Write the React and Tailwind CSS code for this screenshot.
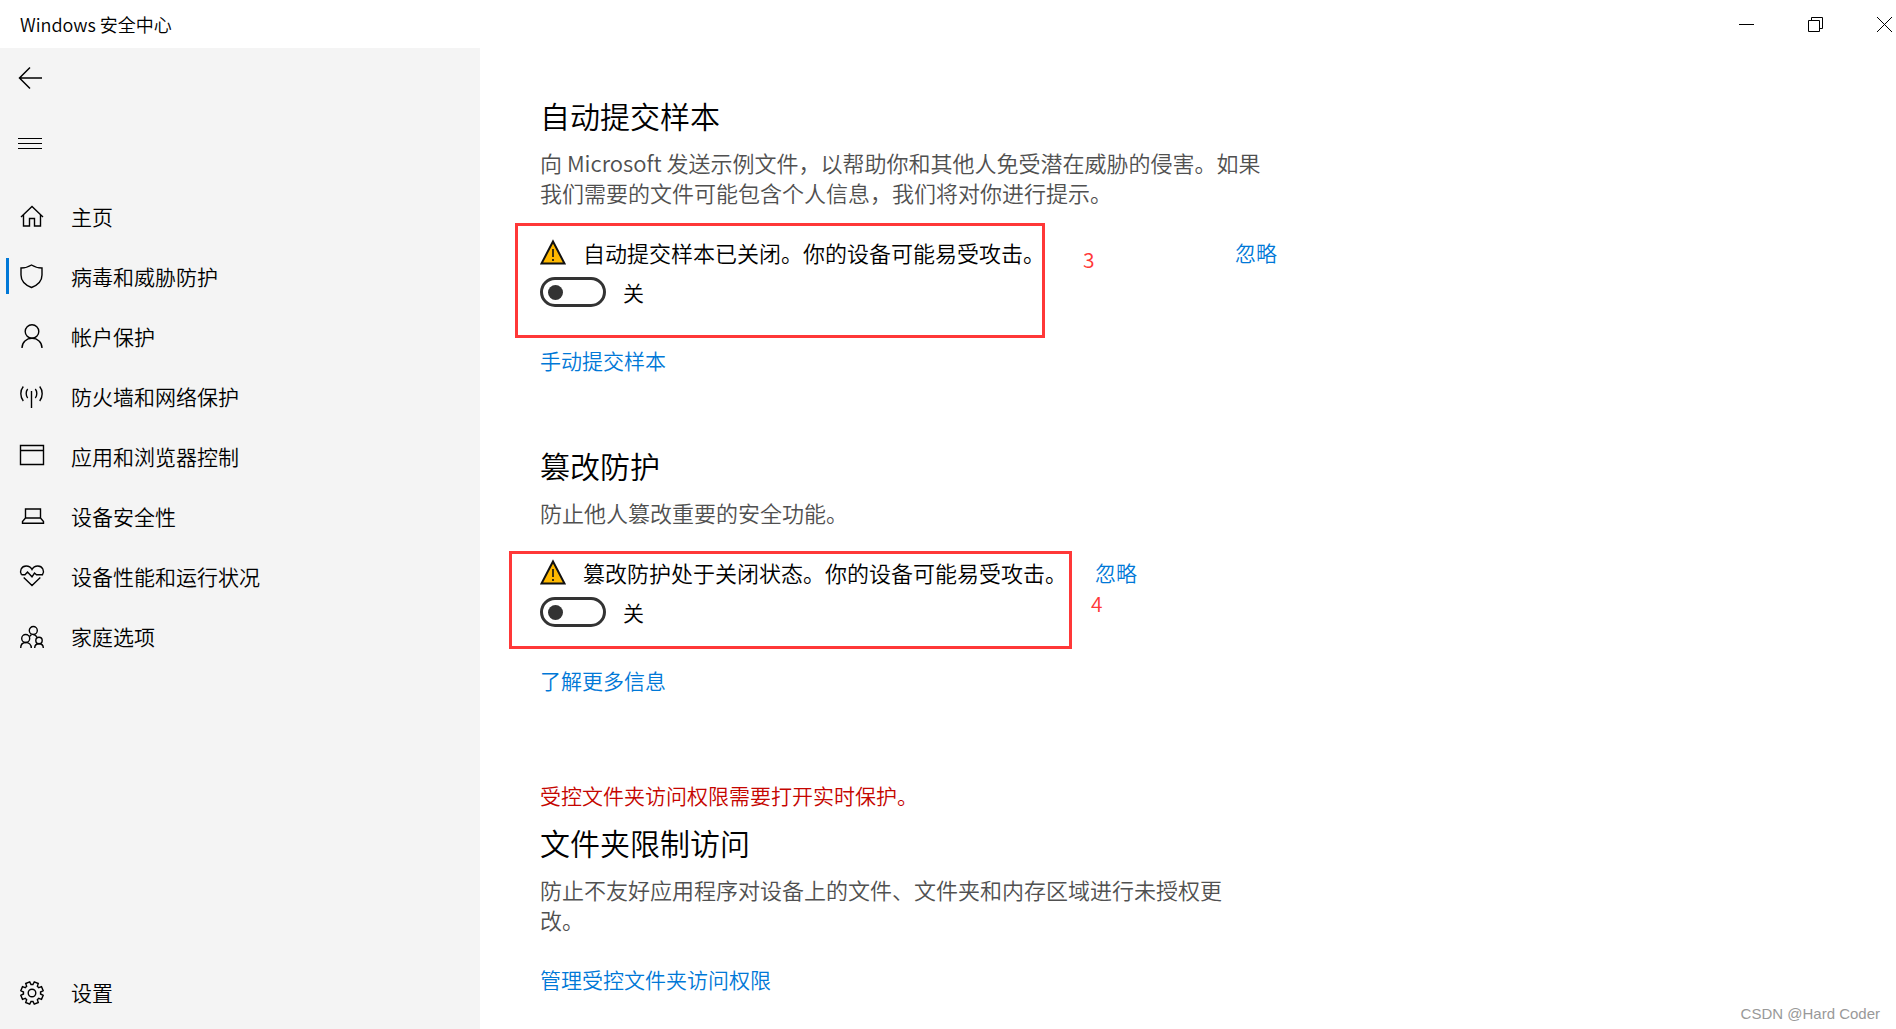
import { useState } from 'react';

// Eight-toothed gear outline around (12, 12)
const gearPath = () => {
  const points = [];
  for (let i = 0; i < 8; i++) {
    const mid = 22.5 + i * 45;
    [[-16, 8.6], [-11, 11.4], [11, 11.4], [16, 8.6]].forEach(([offset, radius]) => {
      const angle = ((mid + offset) * Math.PI) / 180;
      points.push(`${(12 + radius * Math.sin(angle)).toFixed(2)} ${(12 - radius * Math.cos(angle)).toFixed(2)}`);
    });
  }
  return `M${points.join('L')}Z`;
};

const icons = {
  home: <path d="M1 12L12 1.5L23 12M3.5 10V21H9.5V13.5H14.5V21H20.5V10" />,
  shield: <path d="M11.5 0C8.5 2 4.5 3 1 3V10C1 16 5 20 11.5 22.5C18 20 22 16 22 10V3C18.5 3 14.5 2 11.5 0Z" />,
  account: (
    <>
      <circle cx="12" cy="6.5" r="6.8" />
      <path d="M2 23C2 17 6.5 13.3 12 13.3S22 17 22 23" />
    </>
  ),
  network: (
    <path d="M11.5 6V23M7.7 4C5.7 6.5 5.7 10.5 7.7 13M15.3 4C17.3 6.5 17.3 10.5 15.3 13M3.3 1.5C0 5.5 0 12 3.3 16M19.7 1.5C23 5.5 23 12 19.7 16" />
  ),
  browser: <path d="M.5 .5H23.5V19.5H.5ZM.5 5.5H23.5" />,
  device: <path d="M5.5 4H20.5V13H5.5ZM5.5 13L2.5 16.5V18.3H23.5V16.5L20.5 13" />,
  health: (
    <path d="M1.5 9.7C-.8 6 1.3 1 6.2 1C9 1 11 2.5 12 4.5C13 2.5 15 1 17.8 1C22.7 1 24.8 6 22.5 9.7H16.5L14.5 8L12 11.8L7.5 7L5 9.7H1.5M3.7 12.5L12 20.5L20.3 12.5" />
  ),
  family: (
    <>
      <circle cx="13.3" cy="5.5" r="4" />
      <circle cx="5.7" cy="13.5" r="4" />
      <circle cx="19" cy="15.5" r="3.2" />
      <path d="M.7 23C.7 19.5 3 17.5 5.9 17.5S11.3 19.5 11.3 23M14.7 23C14.7 20.5 16.5 18.7 19 18.7S23.3 20.5 23.3 23M13.5 9.5C15 9.7 16.3 10.8 17 12.5M9.5 11.5L11.5 9.5" />
    </>
  ),
  settings: (
    <>
      <path d={gearPath()} />
      <circle cx="12" cy="12" r="3.8" />
    </>
  )
};

const navItems = [
  { id: 'home', label: '主页' },
  { id: 'shield', label: '病毒和威胁防护' },
  { id: 'account', label: '帐户保护' },
  { id: 'network', label: '防火墙和网络保护' },
  { id: 'browser', label: '应用和浏览器控制' },
  { id: 'device', label: '设备安全性' },
  { id: 'health', label: '设备性能和运行状况' },
  { id: 'family', label: '家庭选项' }
];

function NavItem({ id, label, active }) {
  return (
    <a href={`#${id}`} className="relative flex h-[60px] items-center gap-[27px] pl-5 text-[21px] leading-[30px]">
      {active && <span className="absolute left-1.5 h-9 w-[3px] bg-[#0078d7]" />}
      <svg className="size-6 shrink-0 overflow-visible" viewBox="0 -1 24 24" fill="none" stroke="currentColor" strokeWidth="1.4">
        {icons[id]}
      </svg>
      {label}
    </a>
  );
}

function WarningIcon() {
  return (
    <svg className="size-[26px] shrink-0" viewBox="0 0 26 26">
      <path d="M13 2.5L24.5 24.5H1.5Z" fill="#ffb900" stroke="#111" strokeWidth="2" />
      <path d="M13 10V18M13 20V22" stroke="#111" strokeWidth="1.6" />
    </svg>
  );
}

function Toggle({ id, name }) {
  const [on, setOn] = useState(false);

  return (
    <div className="mt-2.5 flex h-[30px] items-center gap-[17px]">
      <input
        id={id}
        type="checkbox"
        role="switch"
        aria-label={name}
        checked={on}
        onChange={() => setOn(!on)}
        className="flex h-[30px] w-[66px] appearance-none items-center rounded-full border-3 border-[#333] px-[5px] before:size-[15px] before:rounded-full before:bg-[#333] checked:justify-end"
      />
      <label htmlFor={id} className="text-[21px] leading-[30px]">{on ? '开' : '关'}</label>
    </div>
  );
}

function Heading({ children }) {
  return <h2 className="text-[30px] font-[350] leading-10">{children}</h2>;
}

function TextLink({ href, children }) {
  return <a href={href} className="text-[21px] leading-[30px] text-[#0078d7]">{children}</a>;
}

export default function App() {
  return (
    <div className="relative flex min-h-screen flex-col bg-white font-['Noto_Sans_CJK_SC',sans-serif] font-[350] text-black">
      <header className="flex h-12 items-center justify-between pl-5 pr-1">
        <h1 className="text-lg font-[350]">Windows 安全中心</h1>
        <div className="flex gap-[54px]">
          <button aria-label="最小化">
            <svg className="size-[15px]" viewBox="0 0 15 15" fill="none" stroke="currentColor">
              <path d="M0 7.5H15" />
            </svg>
          </button>
          <button aria-label="还原">
            <svg className="size-[15px]" viewBox="0 0 15 15" fill="none" stroke="currentColor">
              <path d="M.5 3.5H11.5V14.5H.5ZM3.5 3.5V.5H14.5V11.5H11.5" />
            </svg>
          </button>
          <button aria-label="关闭">
            <svg className="size-[15px]" viewBox="0 0 15 15" fill="none" stroke="currentColor">
              <path d="M0 0L15 15M15 0L0 15" />
            </svg>
          </button>
        </div>
      </header>

      <div className="flex grow">
        <aside className="flex w-[480px] shrink-0 flex-col bg-[#f4f4f4] pb-[7px]">
          <button aria-label="返回" className="flex h-[60px] items-center pl-[18px]">
            <svg className="size-6" viewBox="0 0 24 24" fill="none" stroke="currentColor" strokeWidth="1.5">
              <path d="M1 12H24M12 1.5L1.5 12L12 22.5" />
            </svg>
          </button>
          <button aria-label="菜单" className="flex h-[70px] items-center pl-[18px]">
            <svg className="size-6" viewBox="0 0 24 24" fill="none" stroke="currentColor">
              <path d="M0 7.5H24M0 12.5H24M0 17.5H24" />
            </svg>
          </button>
          <nav className="mt-2 flex grow flex-col">
            {navItems.map(item => (
              <NavItem key={item.id} {...item} active={item.id === 'shield'} />
            ))}
            <div className="mt-auto">
              <NavItem id="settings" label="设置" />
            </div>
          </nav>
        </aside>

        <main className="grow pl-[60px] pt-[47px]">
          <div className="max-w-[737px]">
            <section>
              <Heading>自动提交样本</Heading>
              <p className="mt-3 text-[22px] leading-[30px] text-[#505050]">
                向 Microsoft 发送示例文件，以帮助你和其他人免受潜在威胁的侵害。如果我们需要的文件可能包含个人信息，我们将对你进行提示。
              </p>
              <div className="relative mt-[30px]">
                <div className="flex items-center gap-[17px]">
                  <WarningIcon />
                  <p className="text-[22px] leading-[30px]">自动提交样本已关闭。你的设备可能易受攻击。</p>
                  <span className="ml-auto flex"><TextLink href="#dismiss-sample">忽略</TextLink></span>
                </div>
                <Toggle id="sample" name="自动提交样本" />
                {/* Step 3 marker */}
                <div className="pointer-events-none absolute -left-[25px] -top-3.5 h-[115px] w-[530px] border-3 border-[#ff3838]" />
                <span className="absolute left-[543px] top-[7px] text-[21px] leading-[30px] text-[#ff3838]">3</span>
              </div>
              <div className="mt-[38px] flex"><TextLink href="#submit">手动提交样本</TextLink></div>
            </section>

            <section className="mt-[70px]">
              <Heading>篡改防护</Heading>
              <p className="mt-3 text-[22px] leading-[30px] text-[#505050]">防止他人篡改重要的安全功能。</p>
              <div className="relative mt-[30px]">
                <div className="flex items-center gap-[17px]">
                  <WarningIcon />
                  <p className="text-[22px] leading-[30px]">篡改防护处于关闭状态。你的设备可能易受攻击。</p>
                  <span className="ml-[11px] flex"><TextLink href="#dismiss-tamper">忽略</TextLink></span>
                </div>
                <Toggle id="tamper" name="篡改防护" />
                {/* Step 4 marker */}
                <div className="pointer-events-none absolute -left-[31px] -top-1.5 h-[98px] w-[563px] border-3 border-[#ff3838]" />
                <span className="absolute left-[551px] top-[31px] text-[21px] leading-[30px] text-[#ff3838]">4</span>
              </div>
              <div className="mt-[38px] flex"><TextLink href="#learn">了解更多信息</TextLink></div>
            </section>

            <section className="mt-[85px]">
              <p className="mb-3 text-[21px] leading-[30px] text-[#c50500]">受控文件夹访问权限需要打开实时保护。</p>
              <Heading>文件夹限制访问</Heading>
              <p className="mt-3 pr-5 text-[22px] leading-[30px] text-[#505050]">
                防止不友好应用程序对设备上的文件、文件夹和内存区域进行未授权更改。
              </p>
              <div className="mt-[30px] flex"><TextLink href="#folders">管理受控文件夹访问权限</TextLink></div>
            </section>
          </div>
        </main>
      </div>

      <span className="absolute bottom-[3px] right-4 font-['Liberation_Sans',sans-serif] text-[15px] font-normal leading-6 text-[#999]">CSDN @Hard Coder</span>
    </div>
  );
}
